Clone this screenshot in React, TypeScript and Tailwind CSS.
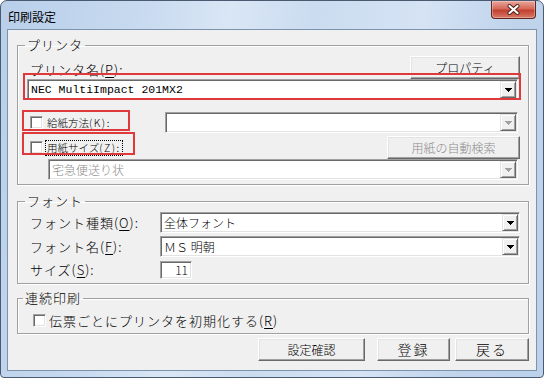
import React from "react";

const jp = "font-['Noto_Sans_CJK_JP',sans-serif] font-light";
const mono = "font-['Liberation_Mono','Noto_Sans_CJK_JP',monospace] font-normal";
const raised =
  "border border-t-white border-l-white border-r-[#696969] border-b-[#696969] bg-[#f0f0f0] shadow-[inset_-1px_-1px_0_#a0a0a0,inset_1px_1px_0_#e3e3e3]";
const sunken =
  "border border-t-[#a0a0a0] border-l-[#a0a0a0] border-r-white border-b-white shadow-[inset_1px_1px_0_#696969,inset_-1px_-1px_0_#e3e3e3]";
const group =
  "m-0 min-w-0 border border-[#a0a0a0] p-0 shadow-[inset_1px_1px_0_#fff,1px_1px_0_#fff]";
const label = "text-[13px] leading-[16px] tracking-[1px] whitespace-nowrap";
const small = "text-[10.5px] leading-[14px] tracking-[0px] whitespace-nowrap";

const U = ({ c }: { c: string }) => (
  <span className="underline decoration-1 underline-offset-[2px]">{c}</span>
);

const Arrow = ({ off }: { off?: boolean }) => (
  <div className="flex w-[16px] shrink-0 items-center justify-center border border-t-[#e3e3e3] border-l-[#e3e3e3] border-r-[#696969] border-b-[#696969] bg-[#f0f0f0] shadow-[inset_1px_1px_0_#fff,inset_-1px_-1px_0_#a0a0a0]">
    <svg width="7" height="4" viewBox="0 0 7 4">
      <path
        d="M0 0h7v1h-1v1h-1v1h-1v1h-1v-1h-1v-1h-1v-1h-1z"
        fill={off ? "#a0a0a0" : "#000"}
      />
    </svg>
  </div>
);

const Combo = ({
  children,
  off,
  className = "",
}: {
  children?: React.ReactNode;
  off?: boolean;
  className?: string;
}) => (
  <div className={`flex h-[21px] shrink-0 bg-white p-[1px] ${sunken} ${className}`}>
    <div
      className={`flex flex-1 items-center overflow-hidden pl-[2px] text-[12px] leading-[15px] whitespace-nowrap ${
        off ? "text-[#8d8d8d]" : "text-black"
      }`}
    >
      {children}
    </div>
    <Arrow off={off} />
  </div>
);

const Check = ({ className = "" }: { className?: string }) => (
  <div className={`h-[13px] w-[13px] shrink-0 bg-white ${sunken} ${className}`} />
);

const Btn = ({
  children,
  off,
  className = "",
}: {
  children: React.ReactNode;
  off?: boolean;
  className?: string;
}) => (
  <div
    className={`flex h-[23px] shrink-0 items-center justify-center text-[12px] leading-[15px] whitespace-nowrap ${raised} ${
      off ? "text-[#8d8d8d]" : "text-black"
    } ${className}`}
  >
    {children}
  </div>
);

export default function App() {
  return (
    <div className={`h-[378px] w-[544px] bg-white text-black ${jp}`}>
      <div className="flex h-full flex-col overflow-hidden rounded-t-[7px] rounded-b-[4px] border border-[#4a5a70] bg-[linear-gradient(100deg,#b9cfea_0%,#c6d9ef_22%,#d9e6f5_38%,#cbdcf0_52%,#d5e3f4_70%,#c0d4ec_85%,#bcd1eb_100%)]">
        {/* title bar */}
        <div className="flex h-[28px] shrink-0 items-start justify-between">
          <span className="pt-[8px] pl-[7px] text-[12px] leading-[15px] font-normal">印刷設定</span>
          <div className="mr-[7px] flex h-[18px] w-[45px] items-center justify-center rounded-b-[4px] border border-t-0 border-[#5e2721] bg-[linear-gradient(#e8a79b,#d5695a_45%,#c2402f_55%,#d87a68)] shadow-[inset_0_0_0_1px_rgba(255,255,255,0.3)]">
            <svg width="13" height="11" viewBox="0 0 13 11">
              <path d="M2.5 2 10.5 9M10.5 2 2.5 9" stroke="#4a1c16" strokeWidth="4" strokeLinecap="round" />
              <path d="M2.5 2 10.5 9M10.5 2 2.5 9" stroke="#fff" strokeWidth="2.2" strokeLinecap="round" />
            </svg>
          </div>
        </div>

        <div className="flex-1 px-[6px] pb-[6px]">
          <div className="relative flex h-full flex-col border border-[#7d92ad] bg-[#f0f0f0] pr-[7px] pl-[9px]">
            {/* プリンタ */}
            <fieldset className={`mt-[7px] h-[148px] ${group}`}>
              <legend className={`ml-[7px] px-[2px] ${label} leading-[14px]`}>プリンタ</legend>
              <div className="mt-[3px] flex h-[23px] items-center justify-between pr-[8px]">
                <span className={`pt-[5px] pl-[12px] ${label}`}>
                  プリンタ名(<U c="P" />):
                </span>
                <Btn className="w-[110px]">プロパティ</Btn>
              </div>
              <Combo className="ml-[9px] w-[491px]">
                <span className={`${mono} text-[11.5px]`}>NEC MultiImpact 201MX2</span>
              </Combo>
              <div className="mt-[12px] flex h-[21px] items-center pr-[10px]">
                <Check className="ml-[12px]" />
                <span className={`ml-[4px] ${small}`}>
                  給紙方法<span className="tracking-[1.5px]">(<U c="K" />):</span>
                </span>
                <Combo off className="ml-auto w-[353px]" />
              </div>
              <div className="mt-[3px] flex h-[23px] items-center pr-[8px]">
                <Check className="ml-[12px]" />
                <span className={`ml-[2px] border border-dotted border-black px-[1px] ${small}`}>
                  用紙サイズ<span className="tracking-[1.5px]">(<U c="Z" />):</span>
                </span>
                <Btn off className="ml-auto w-[133px]">用紙の自動検索</Btn>
              </div>
              <Combo off className="ml-[30px] w-[470px]">宅急便送り状</Combo>
            </fieldset>

            {/* フォント */}
            <fieldset className={`mt-[8px] h-[91px] ${group}`}>
              <legend className={`ml-[7px] px-[2px] ${label} leading-[14px]`}>フォント</legend>
              <div className="mt-[3px] flex h-[21px] items-center">
                <span className={`w-[142px] shrink-0 pl-[12px] ${label}`}>
                  フォント種類(<U c="O" />):
                </span>
                <Combo className="w-[360px]">全体フォント</Combo>
              </div>
              <div className="mt-[3px] flex h-[21px] items-center">
                <span className={`w-[142px] shrink-0 pl-[12px] ${label}`}>
                  フォント名(<U c="F" />):
                </span>
                <Combo className="w-[360px]">ＭＳ 明朝</Combo>
              </div>
              <div className="mt-[4px] flex h-[18px] items-center">
                <span className={`w-[142px] shrink-0 pl-[12px] ${label}`}>
                  サイズ(<U c="S" />):
                </span>
                <div className={`flex h-[18px] w-[32px] items-center justify-end bg-white pr-[3px] text-[12px] ${sunken}`}>
                  11
                </div>
              </div>
            </fieldset>

            {/* 連続印刷 */}
            <fieldset className={`mt-[6px] h-[44px] ${group}`}>
              <legend className={`ml-[5px] px-[2px] ${label} leading-[14px]`}>連続印刷</legend>
              <div className="mt-[4px] flex h-[21px] items-center">
                <Check className="ml-[15px]" />
                <span className={`ml-[3px] ${label}`}>
                  伝票ごとにプリンタを初期化する(<U c="R" />)
                </span>
              </div>
            </fieldset>

            <div className="mt-[4px] flex justify-end">
              <Btn className="w-[107px]">設定確認</Btn>
              <Btn className="ml-[12px] w-[73px] text-[14px] tracking-[2px]">登録</Btn>
              <Btn className="ml-[5px] w-[74px] text-[14px] tracking-[2px]">戻る</Btn>
            </div>

            {/* red annotation boxes */}
            <div className="pointer-events-none absolute top-[43px] left-[15px] h-[27px] w-[498px] border-2 border-[#e0393b]" />
            <div className="pointer-events-none absolute top-[80px] left-[14px] h-[21px] w-[108px] border-2 border-[#e0393b]" />
            <div className="pointer-events-none absolute top-[102px] left-[14px] h-[23px] w-[113px] border-2 border-[#e0393b]" />
          </div>
        </div>
      </div>
    </div>
  );
}
